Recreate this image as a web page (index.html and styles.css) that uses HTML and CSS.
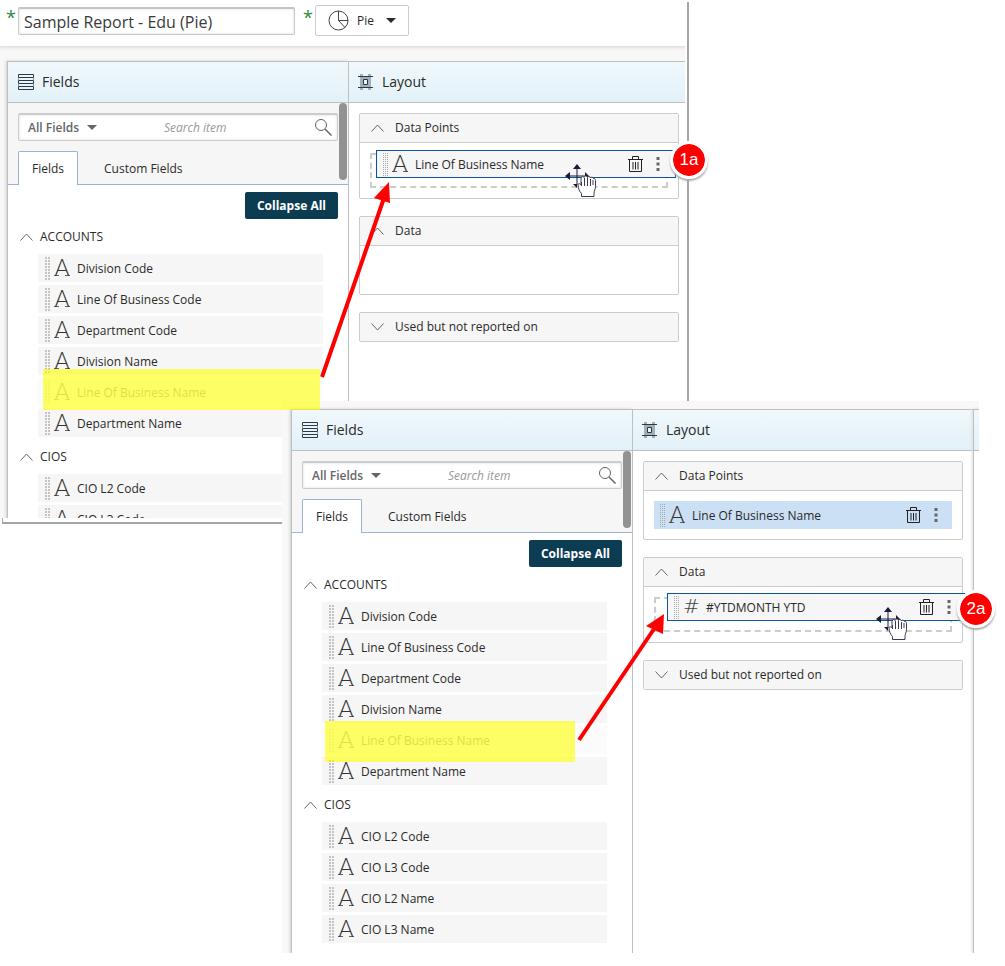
FILE: index.html
```html
<!DOCTYPE html>
<html lang="en">
<head>
<meta charset="utf-8">
<title>Report designer: adding fields to the layout</title>
<link rel="stylesheet" href="styles.css">
</head>
<body>
<svg class="sprite" aria-hidden="true">
  <symbol id="i-rows" viewBox="0 0 16 17"><g fill="none" stroke="#2b3a44"><path d="M.5.5h15v3H.5zM.5 6.500h15v3H.5zM.5 12.500h15v3H.5z"/><path stroke="#8b979f" d="M.5 4v2M15.500 4v2M.5 10v2M15.500 10v2"/></g></symbol>
  <symbol id="i-frame" viewBox="0 0 15 16"><path fill="#a3b0b8" d="M2 0h3v16H2zM10 0h3v16h-3z"/><path fill="#a3b0b8" d="M5 3h5v10H5z"/><g fill="#eaf4f9" stroke="#2b3a44"><path d="M5.500 5.500h4v5h-4z"/><path d="M0 2.500h15M0 13.500h15"/></g></symbol>
  <symbol id="i-up" viewBox="0 0 13 8"><path fill="none" stroke="#666" d="M.5 7.500l6-6.500 6 6.500"/></symbol>
  <symbol id="i-down" viewBox="0 0 13 8"><path fill="none" stroke="#666" d="M.5.500l6 6.500 6-6.500"/></symbol>
  <symbol id="i-caret" viewBox="0 0 10 5"><path fill="currentColor" d="M0 0h10L5 5z"/></symbol>
  <symbol id="i-search" viewBox="0 0 17 17"><g fill="none" stroke="#5b666c"><circle cx="6" cy="6" r="5.500"/><path stroke-width="1.500" d="M10 10l6.500 6.500"/></g></symbol>
  <symbol id="i-pie" viewBox="0 0 21 21"><g fill="none" stroke="#444"><circle cx="10.500" cy="10.500" r="9.500"/><path d="M10.500 1v9.500h9.500M10.500 10.500l6.500 7"/></g></symbol>
  <symbol id="i-trash" viewBox="0 0 15 16"><g fill="none" stroke="#222"><path d="M4.500 3V.5h6V3M0 3.500h15M1.500 3.500v12h12v-12M5 6v7.500M7.500 6v7.500M10 6v7.500"/></g></symbol>
  <symbol id="i-kebab" viewBox="0 0 4 14"><path fill="#666" d="M.5 0h3v3h-3zM.5 5.500h3v3h-3zM.5 11h3v3h-3z"/></symbol>
  <symbol id="i-cursor" viewBox="0 0 32 34"><g fill="#1c1a38"><path d="M12 0l4 5H8zM0 12l5-4v8zM24 12l-4-4v8zM12 24l-4-4h4z"/><path d="M11.500 4h1v17h-1zM4 11.500h17v1H4z"/></g><path fill="#fff" stroke="#3a3852" d="M16.500 32.500v-3c-2-2-3.500-5-3.500-9 1-1.500 2.500-.5 3 .5v-7c.5-2 2.500-2 3-.5.500-2 3-2 3.500 0 .5-1.500 2.500-1.500 3 .5.500-1.500 2.500-1 3 .5.500-.5 2 0 2 2v6c0 3-1.500 4-1.500 7v3h-12.500z"/><path stroke="#3a3852" d="M16.500 18v4M19.500 14v8M22.500 14v8M25.500 15v7M28 16v5"/></symbol>
</svg>

<main class="canvas">
  <section class="shot shot-first" aria-label="Step 1a">
    <div class="clip">
      <header class="topbar">
        <span class="required">*</span>
        <input class="report-name" type="text" aria-label="Report name" value="Sample Report - Edu (Pie)">
        <span class="required">*</span>
        <label class="chart-type"><svg width="21" height="21"><use href="#i-pie"/></svg>
          <select aria-label="Chart type"><option>Pie</option></select>
          <svg width="10" height="5"><use href="#i-caret"/></svg></label>
      </header>
      <div class="workspace">
        <section class="panel fields">
          <h2 class="panel-head"><svg width="16" height="17"><use href="#i-rows"/></svg>Fields</h2>
          <div class="tools">
            <div class="search">
              <select aria-label="Field filter"><option>All Fields</option></select>
              <svg width="10" height="5"><use href="#i-caret"/></svg>
              <input type="search" aria-label="Search item" placeholder="Search item">
              <svg width="17" height="17"><use href="#i-search"/></svg>
            </div>
            <div class="tabs" role="tablist"><button class="tab active" role="tab" aria-selected="true">Fields</button><button class="tab" role="tab">Custom Fields</button></div>
            <div class="scrollbar"></div>
          </div>
          <div class="tree">
            <button class="collapse">Collapse All</button>
            <button class="group"><svg width="13" height="8"><use href="#i-up"/></svg>ACCOUNTS</button>
            <ul class="items">
              <li><i class="grip"></i><b class="type">A</b>Division Code</li>
              <li><i class="grip"></i><b class="type">A</b>Line Of Business Code</li>
              <li><i class="grip"></i><b class="type">A</b>Department Code</li>
              <li><i class="grip"></i><b class="type">A</b>Division Name</li>
              <li class="used"><i class="grip"></i><b class="type">A</b>Line Of Business Name</li>
              <li><i class="grip"></i><b class="type">A</b>Department Name</li>
            </ul>
            <button class="group"><svg width="13" height="8"><use href="#i-up"/></svg>CIOS</button>
            <ul class="items">
              <li><i class="grip"></i><b class="type">A</b>CIO L2 Code</li>
              <li><i class="grip"></i><b class="type">A</b>CIO L3 Code</li>
            </ul>
          </div>
        </section>
        <section class="panel layout">
          <h2 class="panel-head"><svg width="15" height="16"><use href="#i-frame"/></svg>Layout</h2>
          <div class="cards">
            <section class="card">
              <button class="card-head"><svg width="13" height="8"><use href="#i-up"/></svg>Data Points</button>
              <div class="card-body">
                <div class="drop">
                  <div class="chip dragged"><i class="grip fine"></i><b class="type">A</b><span class="name">Line Of Business Name</span>
                    <button aria-label="Delete"><svg width="15" height="16"><use href="#i-trash"/></svg></button><button aria-label="More"><svg width="4" height="14"><use href="#i-kebab"/></svg></button></div>
                  <svg class="cursor" width="32" height="34"><use href="#i-cursor"/></svg>
                </div>
              </div>
            </section>
            <section class="card">
              <button class="card-head"><svg width="13" height="8"><use href="#i-up"/></svg>Data</button>
              <div class="card-body"></div>
            </section>
            <section class="card">
              <button class="card-head"><svg width="13" height="8"><use href="#i-down"/></svg>Used but not reported on</button>
            </section>
          </div>
        </section>
      </div>
    </div>
  </section>

  <section class="shot shot-second" aria-label="Step 2a">
    <div class="workspace">
      <section class="panel fields">
        <h2 class="panel-head"><svg width="16" height="17"><use href="#i-rows"/></svg>Fields</h2>
        <div class="tools">
          <div class="search">
            <select aria-label="Field filter"><option>All Fields</option></select>
            <svg width="10" height="5"><use href="#i-caret"/></svg>
            <input type="search" aria-label="Search item" placeholder="Search item">
            <svg width="17" height="17"><use href="#i-search"/></svg>
          </div>
          <div class="tabs" role="tablist"><button class="tab active" role="tab" aria-selected="true">Fields</button><button class="tab" role="tab">Custom Fields</button></div>
          <div class="scrollbar"></div>
        </div>
        <div class="tree">
          <button class="collapse">Collapse All</button>
          <button class="group"><svg width="13" height="8"><use href="#i-up"/></svg>ACCOUNTS</button>
          <ul class="items">
            <li><i class="grip"></i><b class="type">A</b>Division Code</li>
            <li><i class="grip"></i><b class="type">A</b>Line Of Business Code</li>
            <li><i class="grip"></i><b class="type">A</b>Department Code</li>
            <li><i class="grip"></i><b class="type">A</b>Division Name</li>
            <li class="used"><i class="grip"></i><b class="type">A</b>Line Of Business Name</li>
            <li><i class="grip"></i><b class="type">A</b>Department Name</li>
          </ul>
          <button class="group"><svg width="13" height="8"><use href="#i-up"/></svg>CIOS</button>
          <ul class="items">
            <li><i class="grip"></i><b class="type">A</b>CIO L2 Code</li>
            <li><i class="grip"></i><b class="type">A</b>CIO L3 Code</li>
            <li><i class="grip"></i><b class="type">A</b>CIO L2 Name</li>
            <li><i class="grip"></i><b class="type">A</b>CIO L3 Name</li>
          </ul>
        </div>
      </section>
      <section class="panel layout">
        <h2 class="panel-head"><svg width="15" height="16"><use href="#i-frame"/></svg>Layout</h2>
        <div class="cards">
          <section class="card">
            <button class="card-head"><svg width="13" height="8"><use href="#i-up"/></svg>Data Points</button>
            <div class="card-body">
              <div class="chip"><i class="grip fine"></i><b class="type">A</b><span class="name">Line Of Business Name</span>
                <button aria-label="Delete"><svg width="15" height="16"><use href="#i-trash"/></svg></button><button aria-label="More"><svg width="4" height="14"><use href="#i-kebab"/></svg></button></div>
            </div>
          </section>
          <section class="card">
            <button class="card-head"><svg width="13" height="8"><use href="#i-up"/></svg>Data</button>
            <div class="card-body">
              <div class="drop">
                <div class="chip dragged"><i class="grip fine"></i><b class="type number">#</b><span class="name">#YTDMONTH YTD</span>
                  <button aria-label="Delete"><svg width="15" height="16"><use href="#i-trash"/></svg></button><button aria-label="More"><svg width="4" height="14"><use href="#i-kebab"/></svg></button></div>
                <svg class="cursor" width="32" height="34"><use href="#i-cursor"/></svg>
              </div>
            </div>
          </section>
          <section class="card">
            <button class="card-head"><svg width="13" height="8"><use href="#i-down"/></svg>Used but not reported on</button>
          </section>
        </div>
      </section>
      <section class="panel next"><div class="panel-head"></div></section>
    </div>
  </section>

  <div class="highlight highlight-first"></div>
  <div class="highlight highlight-second"></div>
  <svg class="arrows" viewBox="0 0 1005 966" aria-hidden="true">
    <g stroke="#f00" stroke-width="4"><path d="M322 377L384 198M579 740L656 626"/></g>
    <g fill="#f00"><path d="M389 182l1 21-16-5zM664 614l-1 20-17-8z"/></g>
  </svg>
  <span class="badge badge-first">1a</span>
  <span class="badge badge-second">2a</span>
</main>
</body>
</html>
```
FILE: styles.css
```css
* { box-sizing: border-box; }
body { margin: 0; background: #fff; color: #2a2a2a; font: 12px/16px "Open Sans", sans-serif; }
button, input, select { font: inherit; color: inherit; margin: 0; padding: 0; border: 0; background: none; border-radius: 0; appearance: none; outline: 0; }
svg { flex: none; display: block; }
ul { margin: 0; padding: 0; list-style: none; }
.sprite { position: absolute; width: 0; height: 0; }

/* The annotated canvas: two overlapping windows and the marks over them */
.canvas { position: relative; min-height: 966px; overflow: hidden; }
.shot { position: absolute; }
.shot-first { left: 2px; top: 2px; width: 687px; height: 522px; border: solid #a6a6a6; border-width: 0 2px 2px 0; }
.shot-first::before { content: ""; position: absolute; left: 0; bottom: 0; width: 1px; height: 4px; background: #a6a6a6; }
.clip { position: absolute; left: -2px; top: -2px; width: 685px; height: 518px; overflow: hidden; background: #f8f8f8; }
.shot-second { left: 282px; top: 401px; width: 697px; padding: 8px 0 0 9px; background: #f8f8f8; overflow: hidden; }

.topbar { display: flex; align-items: flex-start; height: 47px; padding: 5px 5px 0; background: #fff; border-bottom: 1px solid #e2e2e2; box-shadow: 0 1px 3px #ddd; }
.required { width: 13px; padding: 3px 1px 0; color: #2e8b3d; font-size: 18px; line-height: 18px; }
.report-name { width: 277px; height: 28px; margin: 2px 7px 0 0; padding: 0 5px; border: 1px solid #c8c8c8; border-top: 2px solid #c4c4c4; border-radius: 2px; box-shadow: inset 0 0 3px #ddd; background: #fff; font-size: 16px; color: #3a3a3a; }
.chart-type { display: flex; align-items: center; gap: 8px; height: 31px; padding: 0 12px; border: 1px solid #ccc; border-radius: 2px; }
.chart-type select { width: 21px; }

.workspace { display: flex; }
.clip .workspace { padding: 14px 0 0 7px; }
.panel { border: 1px solid #bfbfbf; border-width: 1px 0 0 1px; background: #fff; }
.fields { flex: none; width: 341px; box-shadow: -1px 0 3px #ccc; }
.layout { flex: none; width: 341px; }
.next { flex: 1; box-shadow: -1px 0 3px #ddd; }
.panel-head { display: flex; align-items: center; gap: 8px; height: 41px; margin: 0; padding: 0 10px; border-bottom: 1px solid #bfbfbf; background: linear-gradient(#f0f8fc, #e2f1f8); font-size: 14px; font-weight: 500; }
.layout .panel-head { padding-left: 9px; gap: 9px; }

.tools { position: relative; padding: 10px 10px 0; background: #f6f6f6; border-bottom: 1px solid #9db3d3; }
.search { display: flex; align-items: center; height: 28px; padding: 0 5px 0 9px; border: 1px solid #ccc; border-top-width: 2px; border-radius: 2px; box-shadow: inset 0 0 3px #ddd; background: #fff; color: #666; }
.search select { width: 59px; font-weight: 600; }
.search input { flex: 1; min-width: 0; padding-left: 67px; }
.search input::placeholder { color: #999; font-style: italic; opacity: 1; }
.tabs { display: flex; margin: 10px 0 -1px; }
.tab { height: 34px; padding: 2px 26px 0; }
.tab.active { padding: 1px 13px 0; border: 1px solid #9db3d3; border-bottom: 0; border-radius: 2px 2px 0 0; background: #fff; font-weight: 500; }
.scrollbar { position: absolute; right: 1px; top: 0; width: 8px; height: 77px; border-radius: 4px; background: #929292; }

.tree { display: flex; flex-direction: column; align-items: flex-start; padding: 7px 10px 10px; }
.collapse { align-self: flex-end; height: 27px; padding: 0 12px; border-radius: 2px; background: #0c3c51; color: #fff; font-weight: 700; }
.group { display: flex; align-items: center; gap: 7px; height: 19px; margin: 8px 0 8px 2px; }
.items { align-self: stretch; display: grid; gap: 3px; margin: 0 15px 0 20px; }
.items li { display: flex; align-items: center; height: 28px; padding: 2px 0 0 7px; background: #f6f6f6; }
.items .used { opacity: .4; }
.items + .group { margin: 10px 0 8px 2px; }
.grip { flex: none; width: 5px; height: 23px; margin: 0 4px 2px 0; background: conic-gradient(at 2px 2px, transparent 75%, #c4c4c4 0) 0 0 / 3px 3px; }
.grip.fine { background: conic-gradient(at 1px 1px, transparent 75%, #aaa 0) 0 0 / 2px 2px; }
.type { width: 16px; height: 17px; margin: 0 7px 4px 0; text-align: center; font: 300 23px/17px Lato, sans-serif; color: #333; background: linear-gradient(#666 0 0) 0 100% / 5px 1px no-repeat, linear-gradient(#666 0 0) 100% 100% / 5px 1px no-repeat; }
.type.number { background: none; font-family: "DejaVu Sans", sans-serif; font-weight: 200; font-size: 20px; color: #444; }

.cards { display: grid; gap: 17px; padding: 10px; }
.card { border: 1px solid #ccc; border-radius: 2px; }
.card-head { display: flex; align-items: center; gap: 11px; width: 100%; height: 28px; padding-left: 11px; background: #f6f6f6; }
.card-body { min-height: 49px; padding: 10px; border-top: 1px solid #ccc; }
.chip { display: flex; align-items: center; width: 298px; height: 28px; padding: 2px 14px 0 6px; background: #cce0f5; }
.chip .name { flex: 1; }
.chip button { margin-bottom: 3px; }
.chip button + button { margin-left: 13px; }
.drop { position: relative; height: 35px; border: 2px dashed #ccc; }
.chip.dragged { position: absolute; left: 4px; top: -5px; width: 300px; padding-right: 15px; border: 1px solid #0a55a0; background: #f6f6f6; }
.shot-second .chip.dragged { left: 11px; top: -6px; }
.cursor { position: absolute; left: 193px; top: 9px; }
.shot-second .cursor { left: 220px; top: 8px; }

.highlight { position: absolute; background: rgba(255, 255, 0, .6); }
.highlight-first { left: 43px; top: 369px; width: 277px; height: 41px; }
.highlight-second { left: 325px; top: 721px; width: 250px; height: 41px; }
.arrows { position: absolute; left: 0; top: 0; width: 1005px; height: 966px; pointer-events: none; }
.badge { position: absolute; display: grid; place-items: center; width: 38px; height: 38px; border: 3px solid #fff; border-radius: 50%; background: #f00; background-clip: padding-box; box-shadow: 0 2px 2px #aaa; color: #fff; font: 17px/20px "Liberation Sans", sans-serif; }
.badge-first { left: 670px; top: 141px; }
.badge-second { left: 957px; top: 590px; }
```
